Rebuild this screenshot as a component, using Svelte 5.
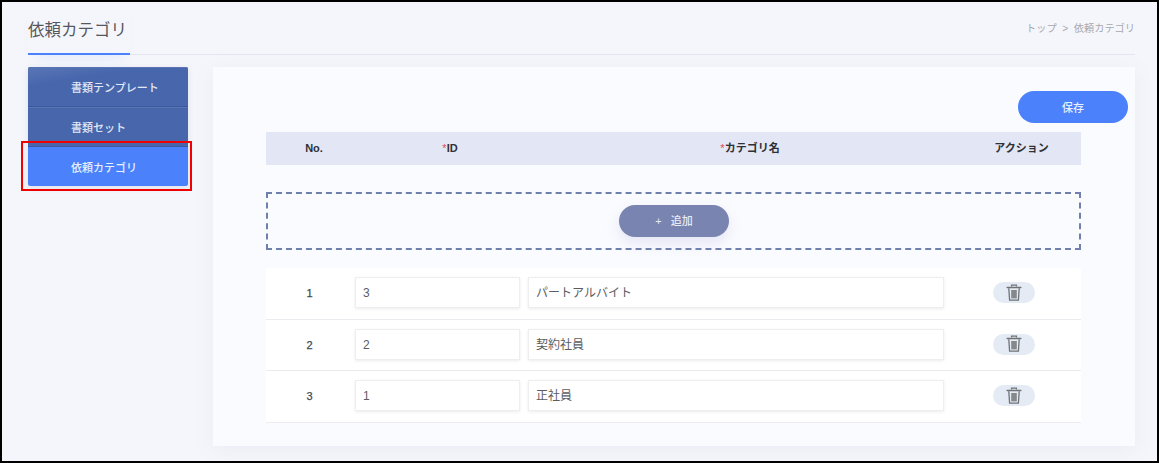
<script>
  const rows = [
    { no: 1, id: '3', name: 'パートアルバイト' },
    { no: 2, id: '2', name: '契約社員' },
    { no: 3, id: '1', name: '正社員' }
  ];
  const menu = [
    { label: '書類テンプレート', active: false },
    { label: '書類セット', active: false },
    { label: '依頼カテゴリ', active: true }
  ];
</script>

<div class="frame">
  <header class="head">
    <h1 class="title">依頼カテゴリ</h1>
    <div class="crumb">トップ &nbsp;&gt;&nbsp; 依頼カテゴリ</div>
  </header>

  <div class="body">
    <nav class="side">
      {#each menu as m}
        <div class="item" class:active={m.active}>{m.label}</div>
      {/each}
      <div class="redbox"></div>
    </nav>

    <main class="card">
      <div class="actions"><button class="save">保存</button></div>
      <div class="table">
        <div class="thead">
          <div class="c">No.</div>
          <div class="c"><span class="req">*</span>ID</div>
          <div class="c"><span class="req">*</span>カテゴリ名</div>
          <div class="c">アクション</div>
        </div>
        <div class="dash">
          <button class="add"><span class="plus">+</span>追加</button>
        </div>
        <div class="rows">
          {#each rows as r}
            <div class="row">
              <div class="c no">{r.no}</div>
              <div class="field">{r.id}</div>
              <div class="field">{r.name}</div>
              <div class="c act">
                <span class="trash">
                  <svg width="16" height="18" viewBox="0 0 16 18" fill="none">
                    <path d="M5.5 2.6V1.2h5v1.4" stroke="#6f7276" stroke-width="1.2"/>
                    <path d="M1.2 3.4h13.6" stroke="#6f7276" stroke-width="1.5" stroke-linecap="round"/>
                    <path d="M2.8 4.2l.8 12h8.8l.8-12" stroke="#6f7276" stroke-width="1.3"/>
                    <rect x="5.2" y="6" width="5.6" height="8.4" fill="#85888c"/>
                  </svg>
                </span>
              </div>
            </div>
          {/each}
        </div>
      </div>
    </main>
  </div>
</div>

<style>
  :global(body) {
    margin: 0;
    background: #000;
  }
  .frame {
    box-sizing: border-box;
    width: 1155px;
    height: 459px;
    margin: 2px;
    padding: 0 22px 0 26px;
    background: #f5f6fb;
    font-family: "Liberation Sans", "Noto Sans CJK JP", sans-serif;
    color: #333;
    overflow: hidden;
  }
  .head {
    height: 53px;
    box-sizing: border-box;
    display: flex;
    justify-content: space-between;
    border-bottom: 1px solid #e3e5f0;
    margin-bottom: 12px;
  }
  .title {
    margin: 0;
    width: 102px;
    height: 53px;
    box-sizing: border-box;
    padding-top: 16px;
    font-size: 16.5px;
    line-height: 24px;
    font-weight: 400;
    color: #55585f;
    white-space: nowrap;
    border-bottom: 2px solid #4b82fb;
    box-shadow: 0 10px 14px -8px rgba(75, 130, 251, 0.12);
  }
  .crumb {
    padding-top: 19px;
    font-size: 10.2px;
    line-height: 16px;
    color: #a8a9ad;
  }
  .body {
    display: flex;
    align-items: flex-start;
    gap: 25px;
  }
  .side {
    position: relative;
    width: 160px;
    flex: none;
    border-radius: 2px;
    box-shadow: 0 2px 6px rgba(60, 80, 140, 0.12);
  }
  .item {
    box-sizing: border-box;
    height: 40px;
    padding-left: 43px;
    font-size: 11px;
    font-weight: 500;
    line-height: 42px;
    color: #e3e8f5;
    background: #4766ac;
    border-bottom: 1px solid #3d5a9c;
    box-shadow: inset 0 1px 0 #5874b4;
  }
  .item:first-child {
    border-radius: 2px 2px 0 0;
    background: linear-gradient(170deg, #5a76b6 0%, #4766ac 30%);
  }
  .item.active {
    height: 39px;
    background: #4b82fb;
    color: #e8effe;
    border-bottom: none;
    box-shadow: none;
    border-radius: 0 0 2px 2px;
  }
  .redbox {
    position: absolute;
    left: -7px;
    top: 74px;
    width: 171px;
    height: 50px;
    box-sizing: border-box;
    border: 2.5px solid #f00000;
  }
  .card {
    position: relative;
    box-sizing: border-box;
    width: 922px;
    height: 379px;
    padding: 24px 7px 0 53px;
    background: #fafbfe;
    box-shadow: 0 4px 20px rgba(120, 130, 170, 0.08);
    display: flex;
    flex-direction: column;
  }
  .actions {
    display: flex;
    justify-content: flex-end;
    height: 41px;
  }
  .save {
    width: 110px;
    height: 32px;
    border: none;
    border-radius: 16px;
    background: #4b82fb;
    color: #e8effe;
    font: 500 11px/34px "Liberation Sans", "Noto Sans CJK JP", sans-serif;
    padding: 0;
  }
  .table {
    width: 815px;
  }
  .thead {
    display: grid;
    grid-template-columns: 96px 176px 424px 119px;
    align-items: center;
    height: 33px;
    background: #e3e6f4;
    font-size: 11px;
    font-weight: 700;
    color: #2f3136;
    line-height: 33px;
  }
  .c {
    text-align: center;
  }
  .req {
    color: #e5484d;
    font-weight: 400;
  }
  .dash {
    box-sizing: border-box;
    height: 58px;
    margin: 27px 0 18px;
    border: 2px dashed #7080ad;
    display: flex;
    justify-content: center;
    padding-top: 11px;
  }
  .add {
    width: 110px;
    height: 32px;
    border: none;
    border-radius: 16px;
    background: #7a84b0;
    color: #e8eaf4;
    font: 500 11px/31px "Liberation Sans", "Noto Sans CJK JP", sans-serif;
    padding: 0;
    margin-left: 1px;
    box-shadow: 0 6px 14px rgba(130, 120, 210, 0.16);
  }
  .plus {
    margin-right: 9px;
  }
  .rows {
    background: #fff;
  }
  .row {
    display: grid;
    grid-template-columns: 89px 173px 416px 137px;
    align-items: center;
    box-sizing: border-box;
    height: 51.5px;
    border-bottom: 1px solid #ececf0;
    padding-bottom: 1px;
  }
  .no {
    font-size: 11px;
    color: #44474c;
    padding: 1px 2px 0 0;
    -webkit-text-stroke: 0.25px #44474c;
  }
  .field {
    box-sizing: border-box;
    height: 31px;
    margin-right: 8px;
    padding-left: 7px;
    border: 1px solid #eeeef1;
    box-shadow: 0 1px 3px rgba(0, 0, 0, 0.08);
    background: #fff;
    font-size: 12px;
    line-height: 30px;
    color: #5b5d62;
  }
  .field:nth-child(3) {
    margin-right: 0;
  }
  .act {
    padding-left: 2px;
    display: flex;
    justify-content: center;
  }
  .trash {
    display: flex;
    align-items: center;
    justify-content: center;
    width: 42px;
    height: 21px;
    border-radius: 11px;
    background: #e5ebf5;
  }
</style>
